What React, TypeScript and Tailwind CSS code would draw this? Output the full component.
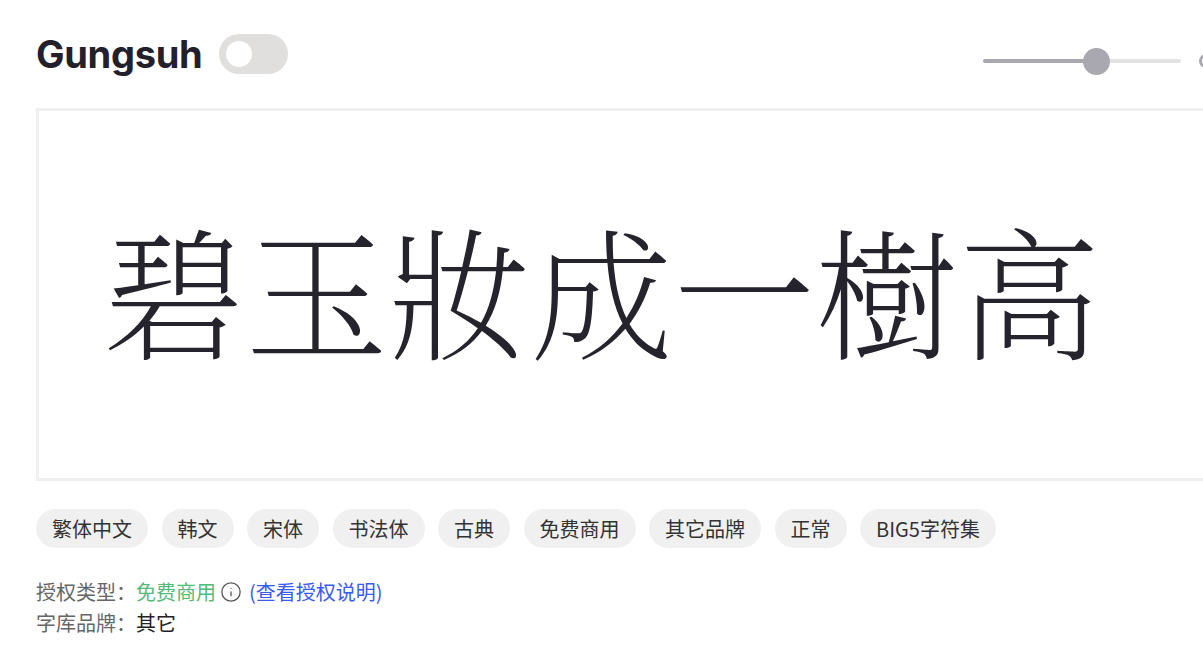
import React from "react";
import { Info } from "lucide-react";

const tags = ["繁体中文", "韩文", "宋体", "书法体", "古典", "免费商用", "其它品牌", "正常", "BIG5字符集"];

const Toggle: React.FC = () => (
  <div className="w-[69px] h-10 rounded-full bg-[#e0dfde] flex items-center pl-[7px]">
    <div className="w-[26px] h-[26px] rounded-full bg-white" />
  </div>
);

const SizeSlider: React.FC<{ value: number }> = ({ value }) => (
  <div className="relative w-[198px] h-[26px] flex items-center">
    <div className="w-full h-1 bg-[#e2e2e2] rounded-full">
      <div className="h-1 bg-[#a9a8b0] rounded-full" style={{ width: `${value}%` }} />
    </div>
    <div
      className="absolute top-0 w-[27px] h-[27px] -ml-[13px] rounded-full bg-[#a9a8b0]"
      style={{ left: `${value}%` }}
    />
  </div>
);

export default function App() {
  return (
    <div
      className="w-[1203px] h-[669px] overflow-hidden bg-white"
      style={{ fontFamily: '"Noto Sans CJK SC", "Noto Sans", sans-serif' }}
    >
      <div className="w-[1180px] pl-[36px] pt-[34px] box-content">
        <div className="flex items-center h-10">
          <h1 className="font-['Inter',sans-serif] font-bold text-[38px] leading-none text-[#23202b] tracking-[-0.3px]">
            Gungsuh
          </h1>
          <div className="ml-[17px]">
            <Toggle />
          </div>
          <div className="ml-auto mt-[13px] flex items-center">
            <SizeSlider value={57} />
            <div className="ml-[18px] mr-[3px] w-[14px] h-[14px] rounded-full border-[3px] border-[#a9a8b0]" />
          </div>
        </div>

        <div className="mt-[34px] h-[373px] border-[3px] border-[#efefef] flex items-center pl-[64px] pb-[12px]">
          <div
            className="text-[142.5px] leading-none text-[#25232c] whitespace-nowrap font-extralight"
            style={{ fontFamily: '"Noto Serif CJK TC", "Noto Sans CJK TC", serif' }}
          >
            碧玉妝成一樹高
          </div>
        </div>

        <div className="mt-[28px] flex gap-[13.5px]">
          {tags.map((t) => (
            <span
              key={t}
              className="h-[39px] px-4 flex items-center rounded-full bg-[#f0f0f0] text-[20px] leading-none text-[#333333]"
            >
              {t}
            </span>
          ))}
        </div>

        <div className="mt-[28px] text-[20px] leading-[31px]">
          <div className="flex items-center">
            <span className="text-[#666666]">授权类型：</span>
            <span className="text-[#55b97a]">免费商用</span>
            <Info size={22} strokeWidth={1.4} className="ml-[4px] text-[#555555]" />
            <span className="ml-[7px] text-[#3a5af0]">(查看授权说明)</span>
          </div>
          <div className="flex items-center">
            <span className="text-[#666666]">字库品牌：</span>
            <span className="text-[#222222]">其它</span>
          </div>
        </div>
      </div>
    </div>
  );
}
